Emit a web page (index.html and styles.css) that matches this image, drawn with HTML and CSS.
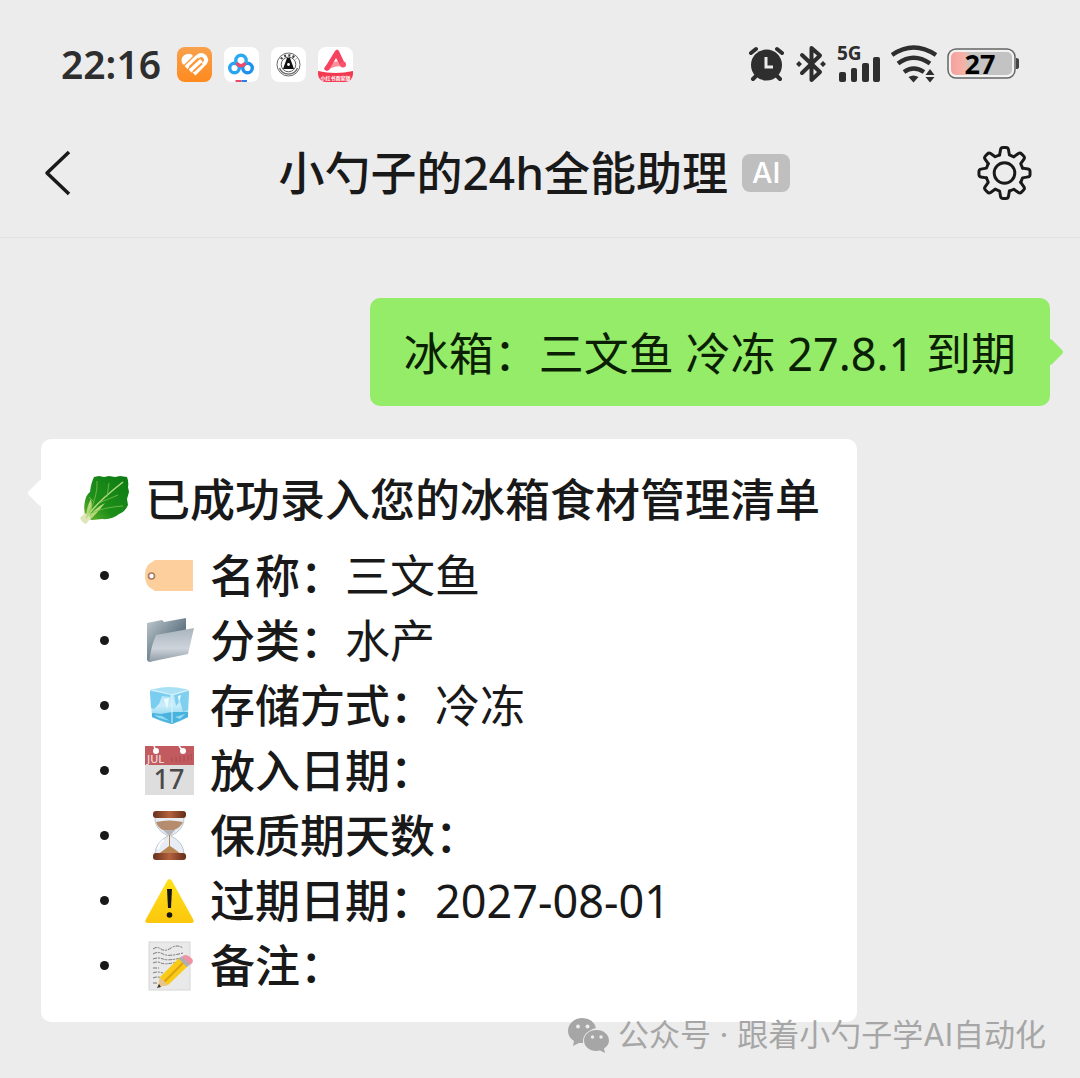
FILE: index.html
```html
<!DOCTYPE html>
<html lang="zh-CN">
<head>
    <meta charset="UTF-8">
    <meta name="viewport" content="width=device-width, initial-scale=1.0">
    <title>小勺子的24h全能助理</title>
    <link rel="stylesheet" href="styles.css">
</head>
<body>
    <div class="status-bar">
        <div class="status-left">
            <span class="time">22:16</span>
            <div class="app-icons">
                <svg width="35" height="35" viewBox="0 0 35 35">
                    <defs>
                        <linearGradient id="orange" x1="0" y1="0" x2="0" y2="1">
                            <stop offset="0" stop-color="#f9a04c"/>
                            <stop offset="1" stop-color="#ff8a1e"/>
                        </linearGradient>
                    </defs>
                    <rect width="35" height="35" rx="8" fill="url(#orange)"/>
                    <path d="M5 16Q3 9 10 7Q14 6 16 9L7 18Z" fill="#fff"/>
                    <g fill="none" stroke="#fff" stroke-width="4">
                        <path d="M9 20.500L20 10Q25 6 28 10Q31 14 26 18L17 27"/>
                        <path d="M13 24L24.500 13.500"/>
                    </g>
                    <path d="M12.500 20L21.500 11.500M16.500 24.500L25 16.500" stroke="#ff9633" stroke-width="1.800"/>
                </svg>
                <svg width="35" height="35" viewBox="0 0 35 35">
                    <rect width="35" height="35" rx="8" fill="#fff"/>
                    <g fill="none" stroke-width="3.4">
                        <circle cx="10.5" cy="21" r="4.8" stroke="#27a5ee"/>
                        <circle cx="23.5" cy="21" r="4.8" stroke="#1e92ea"/>
                        <circle cx="17" cy="13.500" r="5.2" stroke="#2aaaf0"/>
                        <path d="M12.500 16Q17 21.500 21.500 16" stroke="#f0476b"/>
                    </g>
                    <path d="M11.500 33H17.500V35H11.500z" fill="#f0476b"/>
                    <path d="M17.500 33H23V35H17.500z" fill="#2b7fe8"/>
                </svg>
                <svg width="35" height="35" viewBox="0 0 35 35">
                    <rect width="35" height="35" rx="8" fill="#fff"/>
                    <circle cx="17.500" cy="17.500" r="11.500" fill="none" stroke="#444" stroke-width=".8"/>
                    <path d="M10 12A9.500 9.500 0 0 1 25 12" fill="none" stroke="#444" stroke-width="2.400" stroke-dasharray="2 2.200"/>
                    <path d="M8.500 21A9.700 9.700 0 0 0 26.500 21" fill="none" stroke="#666" stroke-width="1.300"/>
                    <circle cx="17.500" cy="17.500" r="7.300" fill="none" stroke="#333" stroke-width=".8"/>
                    <path d="M16 11H19L23 22H12z" fill="#111"/>
                    <circle cx="17.500" cy="17.500" r="1.400" fill="#fff"/>
                </svg>
                <svg width="35" height="35" viewBox="0 0 35 35">
                    <defs>
                        <clipPath id="tile"><rect width="35" height="35" rx="8"/></clipPath>
                    </defs>
                    <g clip-path="url(#tile)">
                        <rect width="35" height="35" fill="#fff"/>
                        <path d="M0 24Q17.500 28 35 24V35H0z" fill="#f2394f"/>
                        <path d="M9 21Q15 16 25 17" fill="none" stroke="#fb8f9a" stroke-width="5" stroke-linecap="round"/>
                        <path d="M6 22L17 4Q19 1 21 4L27 17L22 18L18 11L11 23Q8 25 6 22z" fill="#f7425f"/>
                        <circle cx="25" cy="17.500" r="3" fill="#f7536c"/>
                        <text x="17.500" y="33" class="tile-text">小红书商家版</text>
                    </g>
                </svg>
            </div>
        </div>
        <div class="status-right">
            <svg width="37" height="38" viewBox="0 0 37 38">
                <g stroke="#2e2e2e" stroke-width="4" stroke-linecap="round">
                    <path d="M3 8L8 4M34 8L29 4M5 34L9 30M32 34L28 30"/>
                </g>
                <circle cx="18.500" cy="20" r="15.500" fill="#2e2e2e"/>
                <path d="M18 12V22H25" fill="none" stroke="#ececec" stroke-width="3"/>
            </svg>
            <svg width="32" height="38" viewBox="0 0 32 38">
                <path d="M7 10L25 27L16.500 35V3L25 10.500L7 28" fill="none" stroke="#2e2e2e" stroke-width="4" stroke-linejoin="round" stroke-linecap="round"/>
                <path d="M4 16L7 19L4 22L1 19zM28 16L31 19L28 22L25 19z" fill="#2e2e2e"/>
            </svg>
            <svg class="signal" width="44" height="38" viewBox="0 0 44 38">
                <text x="0" y="15" class="network">5G</text>
                <g fill="#2e2e2e">
                    <rect x="2" y="27" width="7" height="10" rx="2"/>
                    <rect x="14" y="23" width="6" height="14" rx="2"/>
                    <rect x="25" y="18" width="7" height="19" rx="2"/>
                    <rect x="36" y="12" width="7" height="25" rx="2"/>
                </g>
            </svg>
            <svg width="46" height="38" viewBox="0 0 46 38">
                <g fill="none" stroke="#2e2e2e" stroke-width="4.500">
                    <path d="M1 10Q22.500 -5 45 10"/>
                    <path d="M7 18.500Q22.500 7 39 18.500"/>
                    <path d="M13 27Q22.500 20 33 27"/>
                </g>
                <path d="M17.500 32Q22.500 29 27.500 32L22.500 37.500z" fill="#2e2e2e"/>
                <path d="M39 24L43.500 30H34.500zM39 37.500L43.500 32H34.500z" fill="#2e2e2e"/>
            </svg>
            <svg class="battery" width="73" height="38" viewBox="0 0 73 38">
                <defs>
                    <linearGradient id="charge">
                        <stop offset="0" stop-color="#f5a09f"/>
                        <stop offset=".22" stop-color="#f6b3a6"/>
                        <stop offset=".3" stop-color="#c6c3c2"/>
                        <stop offset="1" stop-color="#c3c3c3"/>
                    </linearGradient>
                </defs>
                <rect x="1" y="4" width="67" height="29" rx="8" fill="#f2f2f2" stroke="#666" stroke-width="1.500"/>
                <rect x="4" y="7" width="61" height="23" rx="5" fill="url(#charge)"/>
                <path d="M69 13Q72 13 72 15V22Q72 24 69 24z" fill="#444"/>
                <text x="33" y="29" class="battery-text">27</text>
            </svg>
        </div>
    </div>

    <header class="nav">
        <button class="nav-btn back" aria-label="返回">
            <svg width="28" height="48" viewBox="0 0 28 48">
                <path d="M25 3L3 24L25 45" fill="none" stroke="#191919" stroke-width="3.500" stroke-linejoin="round"/>
            </svg>
        </button>
        <div class="nav-title">
            <h1>小勺子的24h全能助理</h1>
            <span class="ai-tag">AI</span>
        </div>
        <button class="nav-btn" aria-label="设置">
            <svg width="55" height="56" viewBox="-28 -28 56 56">
                <g fill="none" stroke="#191919" stroke-width="3" stroke-linejoin="round" stroke-linecap="round">
                    <path id="tooth" d="M-5 -18.400L-4 -24Q-3.600 -26 -1.500 -26H1.500Q3.600 -26 4 -24L5 -18.400L9.500 -16.500"/>
                    <use href="#tooth" transform="rotate(45)"/>
                    <use href="#tooth" transform="rotate(90)"/>
                    <use href="#tooth" transform="rotate(135)"/>
                    <use href="#tooth" transform="rotate(180)"/>
                    <use href="#tooth" transform="rotate(225)"/>
                    <use href="#tooth" transform="rotate(270)"/>
                    <use href="#tooth" transform="rotate(315)"/>
                    <circle r="10.500"/>
                </g>
            </svg>
        </button>
    </header>

    <main class="chat">
        <div class="bubble sent">冰箱：三文鱼 冷冻 27.8.1 到期</div>

        <div class="bubble received">
            <p class="result">
                <svg class="emoji" viewBox="0 0 49 49">
                    <defs>
                        <linearGradient id="leaf" x1="0" y1="1" x2="1" y2="0">
                            <stop offset="0" stop-color="#6cb52f"/>
                            <stop offset=".35" stop-color="#1f8f1a"/>
                            <stop offset="1" stop-color="#0b7a14"/>
                        </linearGradient>
                    </defs>
                    <path d="M14 2L19 1L24 2L29 1L35 2L40 1L47 2Q49 7 48 12L49 17L47 24L48 30Q45 37 39 39Q32 45 22 44L12 45L6 43Q3 34 5 26Q6 20 10 17Q11 8 14 2z" fill="url(#leaf)"/>
                    <path d="M5 46Q7 30 11 24Q13 33 10 40Q18 31 25 28Q18 37 12 43z" fill="#b5d879"/>
                    <path d="M0 43L5 38L11 43L6 49Q2 48 0 43z" fill="#dfe5b8"/>
                    <path d="M6 43Q16 28 43 7" fill="none" stroke="#b4dc80" stroke-width="1.500"/>
                    <path d="M9 38Q18 20 17 6M12 38Q25 32 43 31M27 22L29 8M19 28L38 20M14 27L9 22" fill="none" stroke="#7cc04d" stroke-width=".8"/>
                </svg>
                <strong>已成功录入您的冰箱食材管理清单</strong>
            </p>
            <ul class="details">
                <li>
                    <svg class="emoji" viewBox="0 0 49 49">
                        <path d="M10 9H48V40H10L4 36Q0 32 0 24Q0 17 4 13z" fill="#fdcf9c"/>
                        <circle cx="6.500" cy="25" r="3" fill="#fff" stroke="#a87963" stroke-width="1.600"/>
                    </svg>
                    <span><strong>名称：</strong>三文鱼</span>
                </li>
                <li>
                    <svg class="emoji" viewBox="0 0 49 49">
                        <defs>
                            <linearGradient id="folder-back" x1="0" y1="0" x2="1" y2="1">
                                <stop offset="0" stop-color="#c0cad0"/>
                                <stop offset=".6" stop-color="#637784"/>
                            </linearGradient>
                            <linearGradient id="folder-front" x1="0" y1="0" x2="0" y2="1">
                                <stop offset="0" stop-color="#a9b4bd"/>
                                <stop offset=".6" stop-color="#cdd3db"/>
                                <stop offset="1" stop-color="#8e9aa3"/>
                            </linearGradient>
                        </defs>
                        <path d="M2 7L17 4L19 6L41 2V36L4 46L2 44z" fill="url(#folder-back)"/>
                        <path d="M11 19L49 12L43 38L4 46Q6 30 11 19z" fill="url(#folder-front)"/>
                    </svg>
                    <span><strong>分类：</strong>水产</span>
                </li>
                <li>
                    <svg class="emoji" viewBox="0 0 49 49">
                        <defs>
                            <linearGradient id="ice" x1="0" y1="0" x2="0" y2="1">
                                <stop offset="0" stop-color="#a4def5"/>
                                <stop offset=".5" stop-color="#c9eefa"/>
                                <stop offset="1" stop-color="#6cc6ea"/>
                            </linearGradient>
                        </defs>
                        <path d="M5 10Q5 8 9 8Q24 4 40 8Q44 8 44 11L43 36Q35 41 27 43Q16 41 7 36z" fill="url(#ice)"/>
                        <path d="M5 10L26 13L25 16L17 15L14 23L9 28L6 27z" fill="#79cdf0"/>
                        <path d="M29 14L44 10L43 29L38 31L35 20L31 25z" fill="#7fcff0"/>
                        <path d="M7 32L16 33L27 31L43 31V36L27 43L7 36z" fill="#49b3de"/>
                        <path d="M19 18L24 17L22 28zM33 15L36 14L34 22z" fill="#eefbff"/>
                        <path d="M27 14V42M7 9L27 14L43 9" fill="none" stroke="#dcf4fc"/>
                        <path d="M9 34L17 35L25 40L14 37zM30 36L40 33L35 38z" fill="#92dcf3"/>
                    </svg>
                    <span><strong>存储方式：</strong>冷冻</span>
                </li>
                <li>
                    <svg class="emoji" viewBox="0 0 49 49">
                        <rect width="49" height="49" fill="#dedede"/>
                        <rect width="49" height="19" fill="#c15b60"/>
                        <path d="M11 5L9 0M38 5L34 0" stroke="#fff" stroke-width="1.500"/>
                        <circle cx="11" cy="5" r="3" fill="#fff"/>
                        <circle cx="38" cy="5" r="3" fill="#fff"/>
                        <path d="M27 12V16M31 11V16M35 10V16M39 10V15M43 9V15M46 8V14" stroke="#a8484e"/>
                        <text x="2" y="17" class="cal-month">JUL</text>
                        <text x="24" y="43" class="cal-day">17</text>
                    </svg>
                    <span><strong>放入日期：</strong></span>
                </li>
                <li>
                    <svg class="emoji" viewBox="0 0 49 49">
                        <defs>
                            <linearGradient id="wood">
                                <stop offset="0" stop-color="#68301c"/>
                                <stop offset=".5" stop-color="#b4623e"/>
                                <stop offset="1" stop-color="#642b18"/>
                            </linearGradient>
                        </defs>
                        <path d="M10 6H39Q40 18 26 25Q39 31 39 44H10Q10 31 23 25Q9 18 10 6z" fill="#e8edf3" stroke="#bdc8d3"/>
                        <path d="M11 11Q24 8 38 11Q36 16 29 19H18Q13 17 11 11z" fill="#b68c6e"/>
                        <path d="M18 19H30L25 25H24z" fill="#b6b6b8"/>
                        <path d="M24 24H25V35Q30 38 37 44H12Q19 39 24 35z" fill="#b98552"/>
                        <path d="M13 38Q14 32 19 29" fill="none" stroke="#fff" stroke-width="2"/>
                        <rect x="8" y="0" width="33" height="7" rx="3" fill="url(#wood)"/>
                        <rect x="8" y="42" width="33" height="7" rx="3" fill="url(#wood)"/>
                    </svg>
                    <span><strong>保质期天数：</strong></span>
                </li>
                <li>
                    <svg class="emoji" viewBox="0 0 49 49">
                        <defs>
                            <linearGradient id="warn" x1="0" y1="0" x2="0" y2="1">
                                <stop offset="0" stop-color="#ffe01b"/>
                                <stop offset="1" stop-color="#fbc70c"/>
                            </linearGradient>
                        </defs>
                        <path d="M22 5Q24.500 1 27 5L48 43Q50 47 46 47H3Q-1 47 1 43z" fill="url(#warn)"/>
                        <path d="M22 13H27L26 32H23z" fill="#151515"/>
                        <circle cx="24.500" cy="39" r="2.800" fill="#151515"/>
                    </svg>
                    <span><strong>过期日期：</strong>2027-08-01</span>
                </li>
                <li>
                    <svg class="emoji" viewBox="0 0 49 49">
                        <rect x="4" y="1" width="41" height="48" fill="#e9e9e9" stroke="#d6d6d6"/>
                        <g fill="none" stroke="#777" stroke-dasharray="4 1 2 1">
                            <path d="M8 8Q12 5 16 8T26 7T38 7M8 13Q13 10 18 13T38 12M8 18Q13 16 18 18T36 17M8 22Q12 20 16 22T32 21M8 27H14M8 32Q12 30 18 32M8 37Q12 35 17 37M8 42H13"/>
                        </g>
                        <path d="M15 36L34 17L43 25L23 44L13 46z" fill="#f9cb18"/>
                        <path d="M19 41L39 21" stroke="#dda20c" stroke-width="2"/>
                        <path d="M15 36L23 44L13 46z" fill="#e9c38c"/>
                        <path d="M14 43L16 46L12 47z" fill="#333"/>
                        <path d="M34 18L37 15L45 23L42 26z" fill="#aab0b5"/>
                        <path d="M37 16Q40 12 45 16Q51 20 45 24z" fill="#f093a0"/>
                    </svg>
                    <span><strong>备注：</strong></span>
                </li>
            </ul>
        </div>
    </main>

    <div class="watermark">
        <svg width="42" height="36" viewBox="0 0 42 36">
            <path d="M14.500 1C6 1 0 7 0 14Q0 20 6 24L5 29L11 26H15Q14 15 28 11Q25 1 14.500 1z" fill="#a6a6a6"/>
            <path d="M28.500 13C21 13 16 18 16 23.500C16 31 24 35.500 32 33.500L37 36L36 31.500Q41 28 41 23.500C41 18 36 13 28.500 13z" fill="#a6a6a6"/>
            <g fill="#ececec">
                <circle cx="10" cy="9.500" r="2"/>
                <circle cx="19.500" cy="9.500" r="2"/>
                <circle cx="24.500" cy="20" r="1.700"/>
                <circle cx="33" cy="20" r="1.700"/>
            </g>
        </svg>
        <span>公众号 · 跟着小勺子学AI自动化</span>
    </div>
</body>
</html>
```
FILE: styles.css
```css
* {
    margin: 0;
    padding: 0;
    box-sizing: border-box;
}

body {
    position: relative;
    min-height: 100vh;
    background-color: #ececec;
    color: #191919;
    font-family: 'Noto Sans', 'Noto Sans CJK SC', sans-serif;
    font-size: 45px;
    line-height: 65px;
}

svg {
    display: block;
    flex-shrink: 0;
}

/* Status bar */
.status-bar {
    display: flex;
    justify-content: space-between;
    align-items: center;
    height: 108px;
    padding: 20px 60px 0 61px;
}

.status-left,
.status-right,
.app-icons {
    display: flex;
    align-items: center;
}

.status-left {
    gap: 16px;
}

.status-right {
    gap: 10px;
}

.app-icons {
    gap: 12px;
}

.time {
    font-size: 39px;
    font-weight: 600;
    line-height: 48px;
    color: #2e2e2e;
}

.signal,
.battery {
    overflow: visible;
}

.network {
    font-size: 19px;
    font-weight: 700;
    fill: #2e2e2e;
}

.battery-text {
    font-size: 27px;
    font-weight: 700;
    text-anchor: middle;
    fill: #000;
}

.tile-text {
    font-size: 5px;
    font-weight: 700;
    text-anchor: middle;
    fill: #fff;
}

/* Nav */
.nav {
    display: flex;
    justify-content: space-between;
    align-items: center;
    height: 130px;
    padding: 0 48px 0 44px;
    border-bottom: 1px solid #e2e2e2;
}

.nav-btn {
    width: 55px;
    height: 56px;
    border: none;
    background: none;
    cursor: pointer;
}

.nav-btn.back {
    width: 48px;
}

.nav-title {
    display: flex;
    align-items: center;
    gap: 14px;
}

.nav-title h1 {
    font-size: 46px;
    font-weight: 500;
}

.ai-tag {
    padding: 0 10px;
    border-radius: 8px;
    background-color: #bfbfbf;
    color: #fff;
    font-family: Inter, sans-serif;
    font-size: 29px;
    font-weight: 500;
    line-height: 38px;
}

/* Messages */
.chat {
    display: flex;
    flex-direction: column;
    gap: 33px;
    padding: 60px 30px 57px 41px;
}

.bubble {
    position: relative;
    border-radius: 10px;
}

.bubble::after {
    content: '';
    position: absolute;
    top: 54px;
    width: 20px;
    height: 20px;
    border-radius: 3px;
    background-color: inherit;
    transform: translateY(-50%) rotate(45deg);
}

.sent {
    align-self: flex-end;
    padding: 23px 34px 20px;
    background-color: #95ec69;
    color: #0b1f05;
}

.sent::after {
    right: -10px;
}

.received {
    align-self: flex-start;
    padding: 28px 37px 24px 39px;
    background-color: #fff;
}

.received::after {
    left: -10px;
}

.bubble strong {
    font-weight: 500;
}

.result,
.details li {
    display: flex;
    align-items: center;
    gap: 16px;
}

.details {
    margin-top: 11px;
    list-style: none;
}

.details li::before {
    content: '';
    width: 9px;
    height: 9px;
    margin: 0 20px 0 20px;
    border-radius: 50%;
    background-color: #191919;
}

.emoji {
    width: 49px;
    height: 49px;
    overflow: visible;
}

.cal-month {
    font-size: 11px;
    font-weight: 500;
    fill: #f3dcdc;
}

.cal-day {
    font-size: 27px;
    font-weight: 500;
    text-anchor: middle;
    fill: #4a4a4a;
}

.watermark {
    position: absolute;
    right: 34px;
    bottom: 24px;
    display: flex;
    align-items: center;
    gap: 8px;
    color: #a6a6a6;
    font-family: Inter, 'Noto Sans CJK SC', sans-serif;
    font-size: 31px;
    line-height: 40px;
}
```
